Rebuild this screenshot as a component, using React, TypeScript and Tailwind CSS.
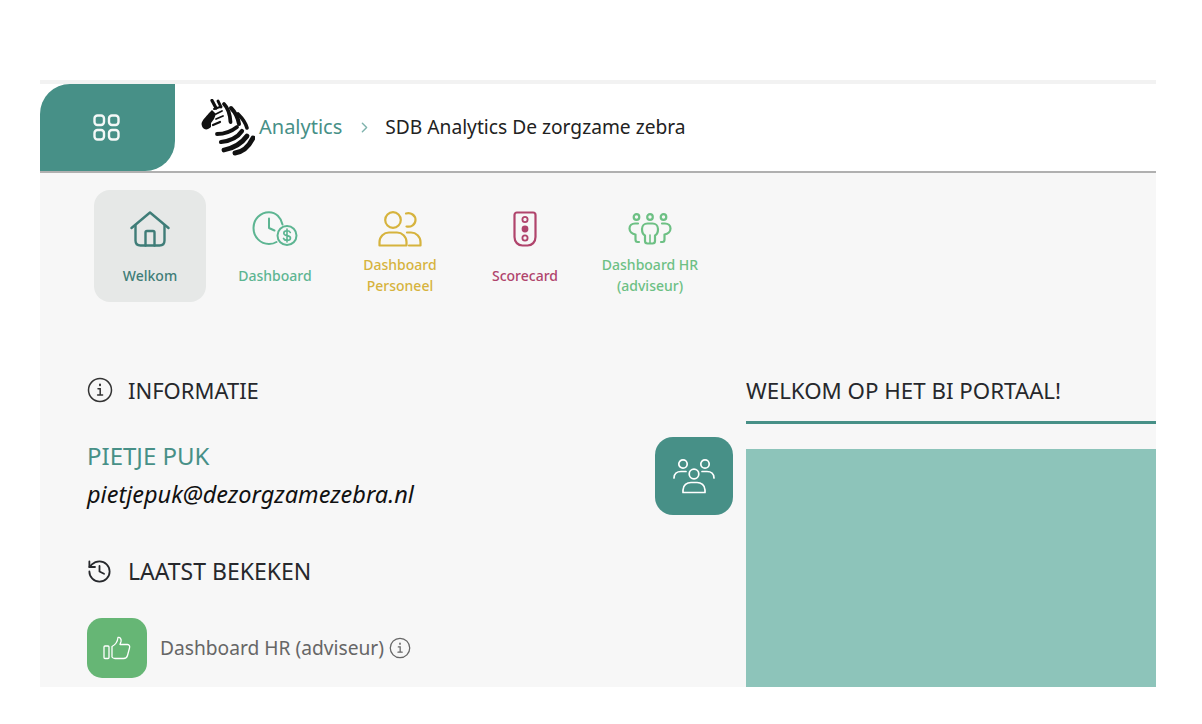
import { ChevronRight, History } from "lucide-react";
import type { ReactNode } from "react";

function InfoIcon({ size = 26 }: { size?: number }) {
  return (
    <svg width={size} height={size} viewBox="0 0 26 26" fill="none" stroke="currentColor" strokeWidth="1.5" strokeLinecap="round">
      <circle cx="13" cy="13" r="11.5" />
      <path d="M11 11.8h2.2v6M10.600 18h5" />
      <path d="M13 7.600v.6" strokeWidth="2" />
    </svg>
  );
}

function GridIcon() {
  return (
    <svg width="27" height="27" viewBox="0 0 27 27" fill="none" stroke="#f4f8f7" strokeWidth="2.4">
      <rect x="1.500" y="1.500" width="9.500" height="9.500" rx="3" />
      <rect x="16" y="1.500" width="9.500" height="9.500" rx="3" />
      <rect x="1.500" y="16" width="9.500" height="9.500" rx="3" />
      <rect x="16" y="16" width="9.500" height="9.500" rx="3" />
    </svg>
  );
}

function Zebra() {
  return (
    <svg width="54" height="57" viewBox="0 0 54 57" fill="none" stroke="#111" strokeLinecap="round">
      <path d="M0.500 25C1 21 5 18 8 14L11 11L15 15L13 20L10 24L10 28C6 32 1 31 0.500 25Z" fill="#111" stroke="none" />
      <path d="M11 1.500L15 9" strokeWidth="3.200" />
      <path d="M17 2L20 8" strokeWidth="2.800" />
      <path d="M13 10L19 8" strokeWidth="2" />
      <path d="M15 15L21 12" strokeWidth="1.800" />
      <path d="M15 20L22 17" strokeWidth="1.800" />
      <path d="M12 26L19 23" strokeWidth="2.200" />
      <path d="M23 5C27 9 29 15 29.500 23" strokeWidth="3.800" />
      <path d="M30 9C34 13 37 19 38 25" strokeWidth="4" />
      <path d="M37 15C42 20 45 25 46 29" strokeWidth="3.600" />
      <path d="M16 35C24 35 31 32 36 28" strokeWidth="3.800" />
      <path d="M20 43C29 42 37 38 41 32" strokeWidth="4.200" />
      <path d="M23 51C33 49 41 44 46 37" strokeWidth="4.800" />
      <path d="M34 54C42 53 48 47 52 39" strokeWidth="5" />
    </svg>
  );
}

function HomeIcon() {
  return (
    <svg width="40" height="36" viewBox="0 0 40 36" fill="none" stroke="currentColor" strokeWidth="2.400" strokeLinecap="round" strokeLinejoin="round">
      <path d="M1.500 17L20 1.500L38.500 17" />
      <path d="M5.500 14.500V29.500C5.500 32.500 7.500 34.500 10.500 34.500H29.500C32.500 34.500 34.500 32.500 34.500 29.500V14.500" />
      <path d="M15.500 34.500V21.500C15.500 20.500 16 20 17 20H23C24 20 24.500 20.500 24.500 21.500V34.500" />
    </svg>
  );
}

function ClockIcon() {
  return (
    <svg width="46" height="36" viewBox="0 0 46 36" fill="none" stroke="currentColor" strokeWidth="2" strokeLinecap="round" strokeLinejoin="round">
      <path d="M30.500 13.500C29 6.500 24 1.200 17 1.200C8.500 1.200 1.500 8 1.500 17C1.500 26 8.500 33 17 33C20 33 22.500 32.300 24.500 31" />
      <path d="M17 7.500V17L22.500 19.500" />
      <circle cx="35" cy="24.500" r="9.500" />
      <path d="M38.300 21.500C37.800 20.300 36.500 19.700 35 19.700C33 19.700 31.800 20.800 31.800 22.200C31.800 25.500 38.500 23.800 38.500 27C38.500 28.500 37 29.400 35 29.400C33.300 29.400 32 28.700 31.500 27.400M35 18V31" strokeWidth="1.600" />
    </svg>
  );
}

function PeopleIcon() {
  return (
    <svg width="44" height="36" viewBox="0 0 44 36" fill="none" stroke="currentColor" strokeWidth="2.200" strokeLinecap="round" strokeLinejoin="round">
      <circle cx="15" cy="9" r="7.800" />
      <path d="M1.500 34.500V31C1.500 25.500 6 21.500 11 21.500H19C24 21.500 28.500 25.500 28.500 31V34.500Z" />
      <path d="M28 2.500C33 1 37.500 4.500 37.500 9C37.500 13.500 33 16.500 28.500 15.500" />
      <path d="M29 21.500H33C38 21.500 42.500 25.500 42.500 31V34.500H31" />
    </svg>
  );
}

function TrafficIcon() {
  return (
    <svg width="24" height="36" viewBox="0 0 24 36" fill="none" stroke="currentColor" strokeWidth="2.200" strokeLinejoin="round">
      <path d="M4 1.500H20C21.500 1.500 22.500 2.500 22.500 4V26C22.500 31 19 34.500 14.500 34.500H9.500C5 34.500 1.500 31 1.500 26V4C1.500 2.500 2.500 1.500 4 1.500Z" />
      <circle cx="12" cy="8.500" r="2.600" strokeWidth="1.800" />
      <circle cx="12" cy="18" r="3.400" fill="currentColor" stroke="none" />
      <circle cx="12" cy="27" r="2.600" strokeWidth="1.800" />
    </svg>
  );
}

function TeamIcon() {
  return (
    <svg width="44" height="32" viewBox="0 0 44 32" fill="none" stroke="currentColor" strokeWidth="2.200" strokeLinecap="round" strokeLinejoin="round">
      <circle cx="8.500" cy="4" r="2.800" />
      <circle cx="22" cy="4" r="2.800" />
      <circle cx="35.500" cy="4" r="2.800" />
      <path d="M11 29H9.500C8 29 7.500 28 7.500 26.500V21.500C4 21 1.500 18.500 1.500 15.500C1.500 12.500 4 10.500 7 10.500H10" />
      <path d="M33 29H34.500C36 29 36.500 28 36.500 26.500V21.500C40 21 42.500 18.500 42.500 15.500C42.500 12.500 40 10.500 37 10.500H34" />
      <path d="M17 22.500C15 21.500 14 19 14 16C14 12.500 16.500 10.500 19.500 10.500H24.500C27.500 10.500 30 12.500 30 16C30 19 29 21.500 27 22.500V28C27 29.500 26 30.500 24.500 30.500H19.500C18 30.500 17 29.500 17 28V22.500Z" />
      <path d="M22 22V30" strokeWidth="1.600" />
    </svg>
  );
}

function GroupIcon() {
  return (
    <svg width="42" height="36" viewBox="0 0 42 36" fill="none" stroke="#fff" strokeWidth="1.700" strokeLinecap="round" strokeLinejoin="round">
      <circle cx="10" cy="6" r="4.200" />
      <circle cx="32" cy="6" r="4.200" />
      <circle cx="21" cy="16" r="4.800" />
      <path d="M1 20C1 16 4 13.500 8 13.500H13" />
      <path d="M41 20C41 16 38 13.500 34 13.500H29" />
      <path d="M10 34.500V32C10 27 14 24.500 18 24.500H24C28 24.500 32 27 32 32V34.500Z" />
    </svg>
  );
}

function ThumbIcon() {
  return (
    <svg width="28" height="24" viewBox="0 0 28 24" fill="none" stroke="#fff" strokeWidth="1.300" strokeLinejoin="round" strokeLinecap="round">
      <rect x="1" y="10" width="5" height="12.500" rx="1" />
      <path d="M9 10.500C12 9 14.500 6 15 1.500C17.500 1 18.500 3.500 18 5.500L17 8.500H24.500C26.500 8.500 27 10.500 26.500 12L24.500 19.500C24 21.500 22.500 22.500 20.500 22.500H12C10.500 22.500 9.500 21.800 9 21V10.500Z" />
    </svg>
  );
}

const navItems: { label: ReactNode; icon: ReactNode; color: string; active?: boolean }[] = [
  { label: "Welkom", icon: <HomeIcon />, color: "text-[#3f7d78]", active: true },
  { label: "Dashboard", icon: <ClockIcon />, color: "text-[#5db592]" },
  { label: <>Dashboard<br />Personeel</>, icon: <PeopleIcon />, color: "text-[#d6b33d]" },
  { label: "Scorecard", icon: <TrafficIcon />, color: "text-[#b0446c]" },
  { label: <>Dashboard HR<br />(adviseur)</>, icon: <TeamIcon />, color: "text-[#6dc084]" },
];

export default function App() {
  return (
    <div className="h-[724px] w-full bg-white pt-[80px] pr-[46px] pl-[40px] font-['Noto_Sans',sans-serif]">
      <div className="flex h-[607px] flex-col overflow-hidden border-t-4 border-[#f2f2f2] bg-[#f7f7f7]">
        <header className="flex h-[89px] shrink-0 items-center border-b-2 border-[#b0b0b0] bg-white">
          <div className="flex h-full w-[135px] items-center justify-center rounded-tl-[30px] rounded-br-[30px] bg-[#479087] pr-[3px] pb-[1px]">
            <GridIcon />
          </div>
          <div className="ml-[26px] flex items-center">
            <Zebra />
            <span className="ml-[4px] -translate-y-[1px] text-[20px] text-[#479087]">Analytics</span>
            <ChevronRight className="mr-[12px] ml-[14px] text-[#7fb3ad]" size={17} />
            <span className="text-[19.2px] text-[#222]">SDB Analytics De zorgzame zebra</span>
          </div>
        </header>

        <nav className="flex gap-[13px] pt-[17px] pl-[54px]">
          {navItems.map((item, i) => (
            <div
              key={i}
              className={`flex h-[112px] w-[112px] flex-col items-center pt-[21px] ${item.color} ${item.active ? "rounded-[16px] bg-[#e6e8e7]" : ""}`}
            >
              <div className="flex h-[36px] items-center justify-center">{item.icon}</div>
              <div className="mt-[5px] flex h-[46px] items-center text-center text-[14px] leading-[21px] font-medium">
                <span>{item.label}</span>
              </div>
            </div>
          ))}
        </nav>

        <div className="flex flex-1 pt-[72px] pl-[47px]">
          <div className="w-[568px] shrink-0">
            <div className="flex h-[32px] items-center gap-[15px] text-[#333]">
              <InfoIcon />
              <h2 className="text-[22px] text-[#26282c]">INFORMATIE</h2>
            </div>
            <p className="mt-[33px] text-[24px] leading-[34px] text-[#479087]">PIETJE PUK</p>
            <p className="mt-[4px] text-[23.5px] leading-[34px] text-[#111] italic">pietjepuk@dezorgzamezebra.nl</p>
            <div className="mt-[44px] flex h-[32px] items-center gap-[15px] text-[#26282c]">
              <History size={27} strokeWidth={1.6} className="-ml-[1px]" />
              <h2 className="text-[23px]">LAATST BEKEKEN</h2>
            </div>
            <div className="mt-[31px] flex items-center">
              <div className="flex h-[60px] w-[60px] items-center justify-center rounded-[15px] bg-[#66b675]">
                <ThumbIcon />
              </div>
              <span className="ml-[13px] text-[19.2px] text-[#666]">Dashboard HR (adviseur)</span>
              <span className="ml-[5px] text-[#666]">
                <InfoIcon size={22} />
              </span>
            </div>
          </div>

          <div className="pt-[63px]">
            <div className="flex h-[78px] w-[78px] items-center justify-center rounded-[18px] bg-[#479087]">
              <GroupIcon />
            </div>
          </div>

          <div className="ml-[13px] flex min-w-0 flex-1 flex-col">
            <h2 className="flex h-[32px] translate-y-[1px] items-center text-[22.3px] text-[#26282c]">WELKOM OP HET BI PORTAAL!</h2>
            <div className="mt-[15px] h-[3px] bg-[#479087]" />
            <div className="mt-[25px] flex-1 bg-[#8dc4ba]" />
          </div>
        </div>
      </div>
    </div>
  );
}
